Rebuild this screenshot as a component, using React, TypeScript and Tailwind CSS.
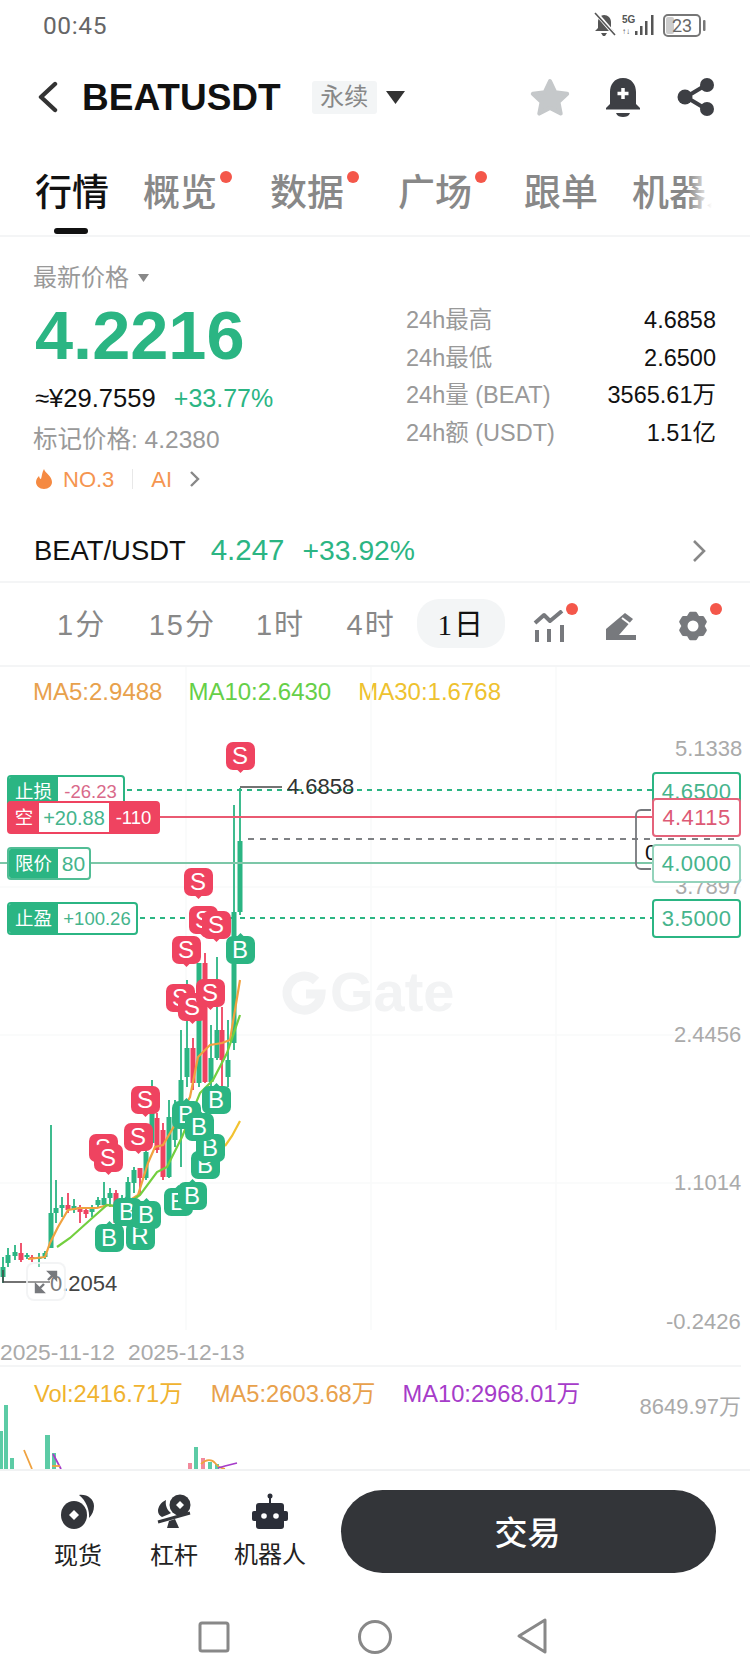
import React from "react";

const G = "#2bb583";
const R = "#ef4360";
const GW = "#2bb583";
const RW = "#ea5a72";

// x, wickTop, wickBottom, bodyTop, bodyBottom, colour
type C = [number, number, number, number, number, "g" | "r"];
const candles: C[] = [
  [3, 1257, 1283, 1267, 1277, "g"],
  [8, 1248, 1267, 1255, 1263, "g"],
  [15, 1245, 1260, 1252, 1256, "g"],
  [21, 1243, 1262, 1253, 1260, "r"],
  [27, 1253, 1259, 1255, 1257, "g"],
  [32, 1255, 1262, 1257, 1259, "r"],
  [39, 1253, 1267, 1257, 1259, "g"],
  [45, 1251, 1259, 1253, 1257, "g"],
  [51, 1125, 1248, 1213, 1248, "g"],
  [56, 1180, 1223, 1208, 1213, "g"],
  [62, 1197, 1217, 1205, 1208, "g"],
  [68, 1193, 1213, 1205, 1210, "r"],
  [74, 1199, 1213, 1206, 1210, "g"],
  [80, 1205, 1223, 1207, 1212, "r"],
  [86, 1208, 1218, 1210, 1214, "r"],
  [92, 1205, 1217, 1208, 1212, "g"],
  [98, 1197, 1208, 1200, 1205, "g"],
  [104, 1182, 1207, 1198, 1205, "g"],
  [110, 1188, 1207, 1193, 1198, "g"],
  [116, 1190, 1223, 1193, 1223, "r"],
  [122, 1195, 1215, 1198, 1212, "g"],
  [128, 1177, 1213, 1182, 1207, "g"],
  [134, 1167, 1193, 1170, 1183, "g"],
  [140, 1168, 1195, 1168, 1178, "r"],
  [146, 1150, 1180, 1152, 1178, "g"],
  [152, 1080, 1143, 1113, 1143, "g"],
  [157, 1113, 1153, 1118, 1150, "r"],
  [163, 1123, 1180, 1130, 1177, "r"],
  [169, 1100, 1178, 1117, 1177, "g"],
  [175, 1100, 1147, 1110, 1140, "g"],
  [181, 1030, 1167, 1080, 1123, "g"],
  [187, 980, 1087, 1048, 1077, "g"],
  [193, 1038, 1090, 1048, 1083, "r"],
  [199, 963, 1087, 963, 1083, "g"],
  [205, 953, 1083, 963, 1082, "r"],
  [211, 1025, 1087, 1058, 1082, "g"],
  [217, 957, 1060, 1030, 1058, "g"],
  [222, 1007, 1087, 1030, 1060, "r"],
  [228, 1020, 1087, 1060, 1077, "g"],
  [234, 805, 1050, 912, 1043, "g"],
  [240, 788, 915, 841, 912, "g"],
];

const markers: [string, number, number][] = [
  ["S", 103, 1148],
  ["S", 108, 1158],
  ["S", 145, 1100],
  ["S", 138, 1137],
  ["B", 127, 1212],
  ["R", 140, 1236],
  ["B", 146, 1215],
  ["B", 109, 1238],
  ["B", 178, 1202],
  ["B", 192, 1196],
  ["B", 205, 1165],
  ["B", 210, 1148],
  ["B", 186, 1115],
  ["B", 199, 1127],
  ["B", 216, 1100],
  ["S", 180, 998],
  ["S", 192, 1007],
  ["S", 210, 993],
  ["S", 186, 950],
  ["S", 203, 920],
  ["S", 216, 925],
  ["S", 198, 882],
  ["S", 240, 756],
  ["B", 240, 950],
];

const gearPoints = Array.from({ length: 6 }, (_, i) => {
  const a = (-90 + i * 60) * (Math.PI / 180);
  const d = 0.2;
  const p = (ang: number, r: number) => `${(15 + r * Math.cos(ang)).toFixed(2)},${(16 + r * Math.sin(ang)).toFixed(2)}`;
  return [p(a - d, 13), p(a + d, 13), p(a + Math.PI / 6, 10)].join(" ");
}).join(" ");

function Marker({ t, x, y }: { t: string; x: number; y: number }) {
  const red = t === "S";
  return (
    <div
      className={`absolute flex h-[28px] w-[29px] items-center justify-center rounded-[7px] text-[24px] leading-none text-white ${red ? "bg-[#ef4360]" : "bg-[#2bb583]"}`}
      style={{ left: x - 14.5, top: y - 667 - 14 }}
    >
      <span className={`absolute left-[12px] size-[5px] rotate-45 ${red ? "bottom-[-2px] bg-[#ef4360]" : "top-[-2px] bg-[#2bb583]"}`} />
      <span className="relative">{t}</span>
    </div>
  );
}

function Dot({ className }: { className: string }) {
  return <span className={`absolute size-[12px] rounded-full bg-[#f4574a] ${className}`} />;
}

function Stat({ label, value }: { label: string; value: string }) {
  return (
    <div className="flex h-[37.6px] items-center justify-between text-[23.5px]">
      <span className="text-[#999]">{label}</span>
      <span className="text-[#111]">{value}</span>
    </div>
  );
}

function Tab({ text, dot, className }: { text: string; dot?: boolean; className: string }) {
  return (
    <div className={`relative w-[74px] shrink-0 text-[37px] leading-none font-medium text-[#888] ${className}`}>
      {text}
      {dot && <Dot className="right-[-15px] top-[-4px]" />}
    </div>
  );
}

function Right({ text, top, border, color }: { text: string; top: string; border: string; color: string }) {
  return (
    <div className={`absolute left-[652px] flex h-[39px] w-[89px] items-center justify-center rounded-[4px] border-2 bg-white text-[22px] tracking-[0.4px] ${top} ${border} ${color}`}>
      {text}
    </div>
  );
}

export default function App() {
  return (
    <div className="h-[1680px] w-[750px] overflow-hidden bg-white [font-family:'Liberation_Sans','Noto_Sans_CJK_SC',sans-serif]">
      {/* status bar */}
      <div className="flex h-[50px] items-center justify-between pl-[43px] pr-[43px]">
        <span className="pt-[3px] text-[24.5px] tracking-[0.6px] text-[#666] [font-family:Roboto,sans-serif]">00:45</span>
        <svg width="114" height="26" viewBox="0 0 114 26">
          <path d="M11 3c4 0 7 3 7 7v6l3 3H2l3-3v-6c0-4 3-7 6-7z" fill="#555" />
          <path d="M8 21h6l-2 3h-2z" fill="#555" />
          <path d="M3 1l19 22" stroke="#fff" strokeWidth="4" />
          <path d="M2 1l20 22" stroke="#555" strokeWidth="1.600" />
          <text x="29" y="11" fontSize="10" fontWeight="700" fill="#555">5G</text>
          <text x="29" y="22" fontSize="8" fontWeight="700" fill="#555">↑↓</text>
          <rect x="42" y="19" width="2.500" height="4" fill="#555" />
          <rect x="47" y="14" width="2.500" height="9" fill="#555" />
          <rect x="52" y="9" width="2.500" height="14" fill="#555" />
          <rect x="58" y="3" width="2.500" height="20" fill="#555" />
          <rect x="71" y="3" width="36" height="21" rx="4" fill="#fff" stroke="#777" strokeWidth="2" />
          <rect x="73" y="5" width="8" height="17" rx="2" fill="#ccc" />
          <text x="89" y="20" fontSize="18" fill="#666" textAnchor="middle" fontFamily="Roboto">23</text>
          <rect x="110" y="8" width="2.500" height="11" rx="1" fill="#777" />
        </svg>
      </div>

      {/* header */}
      <div className="flex h-[94px] items-center pl-[37px]">
        <svg width="22" height="32" viewBox="0 0 22 32" fill="none" stroke="#333" strokeWidth="4.400" strokeLinecap="round" strokeLinejoin="round">
          <path d="M18 3L4 16l14 13" />
        </svg>
        <span className="ml-[23px] text-[37px] font-bold leading-none text-[#111]">BEATUSDT</span>
        <span className="ml-[31px] flex h-[33px] w-[65px] items-center justify-center rounded-[3px] bg-[#f3f5f6] text-[24px] text-[#888]">永续</span>
        <svg width="19" height="13" viewBox="0 0 19 13" className="ml-[9px]">
          <path d="M0 0h19l-9.500 13z" fill="#333" />
        </svg>
        <div className="ml-[124px] flex items-center">
          <svg width="42" height="40" viewBox="0 0 42 40">
            <path d="M21 4l5.200 11.200 12 1.600-8.800 8.200 2.300 11.600L21 31l-10.700 5.600 2.300-11.600-8.800-8.200 12-1.600z" fill="#c5c8ca" stroke="#c5c8ca" strokeWidth="4" strokeLinejoin="round" />
          </svg>
          <svg width="36" height="40" viewBox="0 0 36 40" className="ml-[34px]">
            <path d="M18 1C9 1 5 8 5 15v12l-4 4v1.500h34V31l-4-4V15C31 8 27 1 18 1z" fill="#3d3f44" />
            <path d="M11 36h14c-1 3-4 4-7 4s-6-1-7-4z" fill="#3d3f44" />
            <path d="M18 11v11M12.500 16.500h11" stroke="#fff" strokeWidth="3.500" />
          </svg>
          <svg width="38" height="40" viewBox="0 0 38 40" className="ml-[36px]">
            <path d="M29 8L9 20l20 12" stroke="#3d3f44" strokeWidth="4" fill="none" />
            <circle cx="30" cy="8" r="7" fill="#3d3f44" />
            <circle cx="8" cy="20" r="7.500" fill="#3d3f44" />
            <circle cx="30" cy="32" r="7" fill="#3d3f44" />
          </svg>
        </div>
      </div>

      {/* tabs */}
      <div className="relative flex h-[93px] items-start border-b-2 border-[#f4f5f6] pl-[35px] pt-[31px]">
        <Tab text="行情" className="!text-[#111]" />
        <Tab text="概览" dot className="ml-[34px]" />
        <Tab text="数据" dot className="ml-[53px]" />
        <Tab text="广场" dot className="ml-[54px]" />
        <Tab text="跟单" className="ml-[52px]" />
        <div className="relative ml-[34px] w-[80px] shrink-0 overflow-hidden whitespace-nowrap text-[37px] leading-none font-medium text-[#888]">
          机器人
          <span className="absolute inset-y-0 right-0 w-[24px] bg-gradient-to-r from-white/0 to-white" />
        </div>
        <span className="absolute bottom-[1px] left-[54px] h-[6px] w-[34px] rounded-full bg-[#111]" />
      </div>

      {/* price info */}
      <div className="flex h-[281px] pl-[33px] pr-[34px]">
        <div className="w-[373px] pt-[24px]">
          <div className="flex h-[34px] items-center text-[24px] text-[#999]">
            最新价格
            <svg width="11" height="8" viewBox="0 0 11 8" className="ml-[9px]">
              <path d="M0 0h11L5.500 8z" fill="#888" />
            </svg>
          </div>
          <div className="ml-[2px] flex h-[83px] items-center text-[68.5px] font-bold leading-none text-[#2bb583]">4.2216</div>
          <div className="flex h-[41px] items-center pl-[2px] text-[25.600px] text-[#111]">
            ≈¥29.7559
            <span className="ml-[18px] text-[25px] text-[#2bb583]">+33.77%</span>
          </div>
          <div className="flex h-[42px] items-center text-[24.500px] text-[#999]">标记价格: 4.2380</div>
          <div className="flex h-[36px] items-center pl-[2px] text-[22px] font-medium text-[#f59550]">
            <svg width="18" height="20" viewBox="0 0 18 20">
              <path d="M9 0c1 4 8 7 8 13 0 4-3.500 7-8 7s-8-3-8-7c0-3 2-5 3-6 .5 2 1 3 2 3 1-3 1-7 3-10z" fill="#f58a42" />
            </svg>
            <span className="ml-[10px]">NO.3</span>
            <span className="ml-[18px] h-[20px] w-[1px] bg-[#e8e8e8]" />
            <span className="ml-[18px]">AI</span>
            <svg width="12" height="18" viewBox="0 0 12 18" fill="none" stroke="#888" strokeWidth="2.400" className="ml-[17px]">
              <path d="M2 2l7 7-7 7" />
            </svg>
          </div>
        </div>
        <div className="flex-1 pt-[65px]">
          <Stat label="24h最高" value="4.6858" />
          <Stat label="24h最低" value="2.6500" />
          <Stat label="24h量 (BEAT)" value="3565.61万" />
          <Stat label="24h额 (USDT)" value="1.51亿" />
        </div>
      </div>

      {/* spot row */}
      <div className="flex h-[65px] items-center border-b-2 border-[#f4f5f6] pt-[2px] pl-[34px] pr-[44px]">
        <span className="text-[27.400px] text-[#111]">BEAT/USDT</span>
        <span className="ml-[25px] text-[29.500px] text-[#2bb583]">4.247</span>
        <span className="ml-[18px] text-[28.300px] text-[#2bb583]">+33.92%</span>
        <svg width="14" height="24" viewBox="0 0 14 24" fill="none" stroke="#888" strokeWidth="2.600" className="ml-auto">
          <path d="M2 2l10 10L2 22" />
        </svg>
      </div>

      {/* timeframes */}
      <div className="relative flex h-[84px] items-center border-b-2 border-[#f4f5f6] pt-[4px] text-[29px] text-[#888]">
        <span className="ml-[57px] tracking-[2px]">1分</span>
        <span className="ml-[42.500px] tracking-[2px]">15分</span>
        <span className="ml-[40px] tracking-[2px]">1时</span>
        <span className="ml-[41.500px] tracking-[2px]">4时</span>
        <span className="ml-[21.500px] mt-[-5px] flex h-[49px] w-[88px] items-center justify-center rounded-[22px] bg-[#f3f5f6] pt-[5px] tracking-[2px] text-[#111] [font-family:'Liberation_Serif','Noto_Sans_CJK_SC',serif]">1日</span>
        <div className="relative ml-[28px] h-[32px] w-[33px]">
          <svg width="33" height="32" viewBox="0 0 33 32" fill="none" stroke="#77797d">
            <path d="M2 13L11 5l6 6L29 1" strokeWidth="4" strokeLinejoin="round" />
            <path d="M4 20v12M16 19v13M29 15v17" strokeWidth="4" />
          </svg>
          <Dot className="right-[-12px] top-[-7px]" />
        </div>
        <svg width="32" height="30" viewBox="0 0 32 30" className="ml-[39px]">
          <path d="M20 2l8 6-14 16H1v-6z" fill="#77797d" />
          <path d="M14 24h17v5H1v-5z" fill="#77797d" />
          <path d="M17 7l8 6" stroke="#fff" strokeWidth="2" />
        </svg>
        <div className="relative ml-[41px] h-[32px] w-[30px]">
          <svg width="30" height="32" viewBox="0 0 30 32">
            <polygon points={gearPoints} fill="#77797d" stroke="#77797d" strokeWidth="3" strokeLinejoin="round" />
            <circle cx="15" cy="16" r="5.500" fill="#fff" />
          </svg>
          <Dot className="right-[-14px] top-[-7px]" />
        </div>
      </div>

      {/* chart */}
      <div className="relative h-[804px] overflow-hidden border-b-2 border-[#f1f2f3]">
        <div className="flex h-[50px] items-center pl-[33px] text-[24px]">
          <span className="text-[#e8a14c]">MA5:2.9488</span>
          <span className="ml-[26px] text-[#66cf48]">MA10:2.6430</span>
          <span className="ml-[27px] text-[#eec22f]">MA30:1.6768</span>
        </div>

        <svg width="750" height="803" viewBox="0 667 750 803" className="absolute left-0 top-0">
          {[186, 371, 556].map((x) => (
            <path key={x} d={`M${x} 667V1330`} stroke="#f9fafa" strokeWidth="1.500" />
          ))}
          {[887, 1035, 1183].map((y) => (
            <path key={y} d={`M0 ${y}H741`} stroke="#f9fafa" strokeWidth="1.500" />
          ))}
          <path d="M0 1366H741" stroke="#f1f2f3" strokeWidth="1.500" />
          {/* watermark */}
          <g fill="#f2f3f4">
            <path d="M316 981a17 17 0 1 0 5 13H306" fill="none" stroke="#f2f3f4" strokeWidth="9" />
            <text x="330" y="1011" fontSize="56" fontWeight="700" fontFamily="Liberation Sans">Gate</text>
          </g>
          {/* candles */}
          {candles.map(([x, wt, wb, bt, bb, c], i) => (
            <g key={i} fill={c === "g" ? G : R}>
              <rect x={x - 0.9} y={wt} width="1.800" height={wb - wt} />
              <rect x={x - 2.5} y={bt} width="5" height={Math.max(bb - bt, 2)} />
            </g>
          ))}
          {/* moving averages */}
          <polyline
            fill="none"
            stroke="#f0a23f"
            strokeWidth="2.200"
            points="28,1259 45,1257 50,1243 58,1227 68,1210 80,1208 97,1208 108,1205 120,1207 138,1195 148,1163 155,1147 163,1145 173,1128 190,1097 198,1057 210,1045 222,1043 230,1040 240,980"
          />
          <polyline
            fill="none"
            stroke="#73cf3f"
            strokeWidth="2.200"
            points="57,1247 70,1238 90,1220 107,1205 123,1207 140,1195 157,1172 167,1167 182,1137 200,1093 213,1080 227,1053 240,1015"
          />
          <polyline fill="none" stroke="#f2c230" strokeWidth="2.200" points="225,1146 232,1136 240,1121" />
          {/* order lines */}
          <path d="M127 790H652" stroke={GW} strokeWidth="2" strokeDasharray="5 5" />
          <path d="M140 918H652" stroke={GW} strokeWidth="2" strokeDasharray="5 5" />
          <path d="M248 839H740" stroke="#55585c" strokeWidth="1.600" strokeDasharray="6 6" />
          <path d="M0 863H652" stroke="#7cc7a8" strokeWidth="2" />
          <path d="M160 817H652" stroke={RW} strokeWidth="2" />
          <path d="M240 787H282" stroke="#444" strokeWidth="1.600" />
          <path d="M651 810h-10a5 5 0 0 0-5 5v49a5 5 0 0 0 5 5h10" fill="none" stroke="#77797d" strokeWidth="1.800" />
          <path d="M3 1270v12h47" fill="none" stroke="#444" strokeWidth="1.500" />
        </svg>

        {/* price axis */}
        <span className="absolute left-[675px] top-[70px] text-[22px] leading-[24px] text-[#aaa]">5.1338</span>
        <span className="absolute left-[675px] top-[208px] text-[22px] leading-[24px] text-[#aaa]">3.7897</span>
        <span className="absolute left-[674px] top-[356px] text-[22px] leading-[24px] text-[#aaa]">2.4456</span>
        <span className="absolute left-[674px] top-[504px] text-[22px] leading-[24px] text-[#aaa]">1.1014</span>
        <span className="absolute left-[666px] top-[643px] text-[22px] leading-[24px] text-[#aaa]">-0.2426</span>

        {/* markers */}
        {markers.map(([t, x, y], i) => (
          <Marker key={i} t={t} x={x} y={y} />
        ))}

        <span className="absolute left-[287px] top-[108px] text-[22px] leading-[24px] text-[#333]">4.6858</span>
        <span className="absolute left-[50px] top-[605px] text-[22px] leading-[24px] text-[#444]">0.2054</span>
        <div className="absolute left-[26px] top-[595px] flex h-[39px] w-[40px] items-center justify-center rounded-[8px] border-2 border-[#f0f1f2]/80 bg-white/30">
          <svg width="24" height="24" viewBox="0 0 24 24" fill="#77797d" stroke="#77797d" strokeWidth="2.400">
            <path d="M14 10l8-8" />
            <path d="M15 2h7v7z" />
            <path d="M10 14l-8 8" />
            <path d="M2 15v7h7z" />
          </svg>
        </div>

        {/* left order tags */}
        <div className="absolute left-[7px] top-[108px] flex h-[35px] w-[118px] overflow-hidden rounded-[4px] border-2 border-[#2bb583] bg-white text-[18.500px]">
          <span className="flex w-[49px] items-center justify-center bg-[#2bb583] pb-[2px] text-white">止损</span>
          <span className="flex flex-1 items-center justify-center pb-[2px] text-[#d9698a]">-26.23</span>
        </div>
        <div className="absolute left-[7px] top-[134px] flex h-[33px] w-[153px] overflow-hidden rounded-[4px] border-2 border-[#ef4360] bg-[#ef4360] text-[18.500px] text-white">
          <span className="flex w-[30px] items-center justify-center">空</span>
          <span className="flex w-[70px] items-center justify-center bg-white text-[20px] text-[#45b48c]">+20.88</span>
          <span className="flex flex-1 items-center justify-center">-110</span>
        </div>
        <div className="absolute left-[7px] top-[180px] flex h-[33px] w-[84px] overflow-hidden rounded-[4px] border-2 border-[#52bd95] bg-white text-[18.500px]">
          <span className="flex w-[49px] items-center justify-center bg-[#2bb583] text-white">限价</span>
          <span className="flex flex-1 items-center justify-center text-[21px] text-[#45b48c]">80</span>
        </div>
        <div className="absolute left-[7px] top-[235px] flex h-[33px] w-[131px] overflow-hidden rounded-[4px] border-2 border-[#2bb583] bg-white text-[18.500px]">
          <span className="flex w-[49px] items-center justify-center bg-[#2bb583] text-white">止盈</span>
          <span className="flex flex-1 items-center justify-center text-[#45b48c]">+100.26</span>
        </div>

        {/* right order tags */}
        <span className="absolute left-[645px] top-[174px] text-[22px] leading-[24px] text-[#111]">0</span>
        <Right text="4.6500" top="top-[105px]" border="border-[#2bb583]" color="text-[#45b48c]" />
        <Right text="4.4115" top="top-[131px]" border="border-[#e4637b]" color="text-[#dd5a75]" />
        <Right text="4.0000" top="top-[177px]" border="border-[#93d3bb]" color="text-[#45b48c]" />
        <Right text="3.5000" top="top-[232px]" border="border-[#2bb583]" color="text-[#45b48c]" />

        {/* dates */}
        <span className="absolute left-0 top-[673px] text-[22.800px] leading-[24px] text-[#aaa]">2025-11-12</span>
        <span className="absolute left-[128px] top-[673px] text-[22.800px] leading-[24px] text-[#aaa]">2025-12-13</span>

        {/* volume */}
        <div className="absolute left-[34px] top-[713px] flex text-[23.700px] leading-[28px]">
          <span className="text-[#f0b32f]">Vol:2416.71万</span>
          <span className="ml-[28px] text-[#e8a14c]">MA5:2603.68万</span>
          <span className="ml-[27px] text-[#a63cc9]">MA10:2968.01万</span>
        </div>
        <span className="absolute right-[9px] top-[728px] text-[22px] leading-[24px] text-[#aaa]">8649.97万</span>
        <svg width="250" height="70" viewBox="0 1400 250 70" className="absolute bottom-0 left-0">
          <g fill="#5ccba5">
            <rect x="0" y="1432" width="3" height="38" />
            <rect x="4" y="1406" width="4" height="64" />
            <rect x="10" y="1459" width="4" height="11" />
            <rect x="45" y="1436" width="5" height="34" />
            <rect x="52" y="1454" width="4" height="16" />
            <rect x="194" y="1448" width="4" height="22" />
            <rect x="208" y="1463" width="4" height="7" />
            <rect x="215" y="1465" width="4" height="5" />
          </g>
          <rect x="188" y="1464" width="4" height="6" fill="#f28a9c" />
          <rect x="201" y="1459" width="4" height="11" fill="#f28a9c" />
          <path d="M24 1451l8 19" stroke="#f0a23f" strokeWidth="1.800" fill="none" />
          <path d="M53 1455l8 15" stroke="#a63cc9" strokeWidth="1.800" fill="none" />
          <path d="M52 1467h8" stroke="#f0a23f" strokeWidth="1.800" fill="none" />
          <path d="M201 1465c5-5 11-5 14-1s5 5 10 6" stroke="#f0a23f" strokeWidth="1.800" fill="none" />
          <path d="M218 1469l7-2 12-3" stroke="#a63cc9" strokeWidth="1.800" fill="none" />
        </svg>
      </div>

      {/* bottom bar */}
      <div className="flex h-[110px] items-start pl-[43px]">
        <div className="flex w-[70px] flex-col items-center pt-[23px]">
          <svg width="36" height="36" viewBox="0 0 36 36">
            <path d="M19 1c8-1 15 4 15 11 0 5-2 9-5 12 1-7-3-18-10-23z" fill="#33353a" />
            <ellipse cx="14" cy="21" rx="13" ry="14" fill="#33353a" />
            <path d="M14 16l5 5-5 5-5-5z" fill="#fff" />
          </svg>
          <span className="mt-[10px] text-[24px] leading-[32px] text-[#222]">现货</span>
        </div>
        <div className="ml-[26px] flex w-[70px] flex-col items-center pt-[23px]">
          <svg width="36" height="36" viewBox="0 0 36 36">
            <circle cx="24" cy="11" r="10.500" fill="#33353a" />
            <path d="M24 7l4 4-4 4-4-4z" fill="#fff" />
            <path d="M10 6c-5 2-8 7-8 11 0 3 2 5 4 6 3-1 7-3 9-4-4-3-6-8-5-13z" fill="#33353a" />
            <path d="M2 28l32-9" stroke="#33353a" strokeWidth="3" />
            <path d="M13 27l6-2 4 9H11z" fill="#33353a" />
          </svg>
          <span className="mt-[10px] text-[24px] leading-[32px] text-[#222]">杠杆</span>
        </div>
        <div className="ml-[26px] flex w-[70px] flex-col items-center pt-[22px]">
          <svg width="36" height="37" viewBox="0 0 36 37">
            <circle cx="18" cy="3" r="2.500" fill="#2b2e38" />
            <path d="M17 3h2v8h-2z" fill="#2b2e38" />
            <rect x="4" y="10" width="28" height="26" rx="3" fill="#2b2e38" />
            <rect x="0" y="18" width="36" height="10" rx="2" fill="#2b2e38" />
            <circle cx="12" cy="23" r="2.800" fill="#fff" />
            <circle cx="24" cy="23" r="2.800" fill="#fff" />
          </svg>
          <span className="mt-[9px] whitespace-nowrap text-[24px] leading-[32px] text-[#222]">机器人</span>
        </div>
        <div className="ml-[36px] mt-[19px] flex h-[83px] w-[375px] items-center justify-center rounded-full bg-[#333539] pr-[2px] pt-[4px] text-[33px] font-medium text-white">
          交易
        </div>
      </div>

      {/* nav */}
      <div className="flex h-[98px] items-start pt-[38px]">
        <svg width="34" height="36" viewBox="0 0 34 36" fill="none" stroke="#888" strokeWidth="3" className="ml-[197px]">
          <rect x="3" y="4" width="28" height="28" rx="2" />
        </svg>
        <svg width="38" height="36" viewBox="0 0 38 36" fill="none" stroke="#888" strokeWidth="3" className="ml-[125px]">
          <circle cx="19" cy="18" r="15.500" />
        </svg>
        <svg width="34" height="38" viewBox="0 0 34 38" fill="none" stroke="#888" strokeWidth="3" strokeLinejoin="round" className="ml-[121px] mt-[-2px]">
          <path d="M30 3v32L4 19z" />
        </svg>
      </div>
    </div>
  );
}
